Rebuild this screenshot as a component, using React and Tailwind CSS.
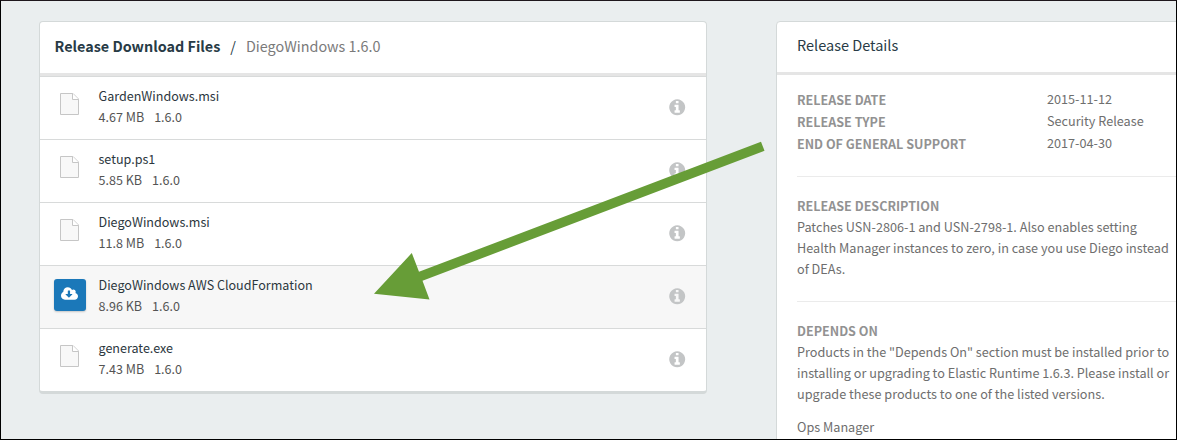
const files = [
  { name: 'GardenWindows.msi', size: '4.67 MB' },
  { name: 'setup.ps1', size: '5.85 KB' },
  { name: 'DiegoWindows.msi', size: '11.8 MB' },
  { name: 'DiegoWindows AWS CloudFormation', size: '8.96 KB', active: true },
  { name: 'generate.exe', size: '7.43 MB' },
];

const details = [
  ['RELEASE DATE', '2015-11-12'],
  ['RELEASE TYPE', 'Security Release'],
  ['END OF GENERAL SUPPORT', '2017-04-30'],
];

function FileIcon() {
  return (
    <svg className="mt-4 ml-1.5 block" width="20" height="23" viewBox="0 0 20 23">
      <path d="M0.5 0.5H13L18.5 6V21.5H0.5Z" fill="#f8f8f8" stroke="#c6c6c6" />
      <path d="M12.5 0.5V6.5H18.5" fill="#fff" stroke="#c6c6c6" />
    </svg>
  );
}

function DownloadButton() {
  return (
    <button className="mt-[13px] flex h-8 w-8 items-center justify-center rounded-[3px] bg-[#1b78b9] shadow-[0_1px_2px_rgba(0,0,0,0.2)]">
      <svg className="mr-px mb-[3px] block" width="17" height="16" viewBox="0 0 1920 1792" fill="#fff">
        <path d="M1280 928q0-14-9-23t-23-9h-224v-352q0-13-9.5-22.5t-22.5-9.5h-192q-13 0-22.5 9.5t-9.5 22.5v352h-224q-13 0-22.5 9.5t-9.5 22.5q0 14 9 23l352 352q9 9 23 9t23-9l351-351q10-12 10-24zm640 224q0 159-112.5 271.5t-271.5 112.5h-1088q-185 0-316.5-131.5t-131.5-316.5q0-130 70-240t188-165q-2-30-2-43 0-212 150-362t362-150q156 0 285.5 87t188.5 231q71-62 166-62 106 0 181 75t75 181q0 76-41 138 130 31 213.5 135.5t83.5 238.5z" />
      </svg>
    </button>
  );
}

function InfoIcon() {
  return (
    <svg className="mt-5 block" width="20" height="20" viewBox="-83 -93 1920 1920" fill="#c3c5c6">
      <path d="M1152 1376v-160q0-14-9-23t-23-9h-96v-512q0-14-9-23t-23-9h-320q-14 0-23 9t-9 23v160q0 14 9 23t23 9h96v320h-96q-14 0-23 9t-9 23v160q0 14 9 23t23 9h448q14 0 23-9t9-23zm-128-896v-160q0-14-9-23t-23-9h-192q-14 0-23 9t-9 23v160q0 14 9 23t23 9h192q14 0 23-9t9-23zm640 416q0 209-103 385.5t-279.5 279.5-385.5 103-385.5-103-279.5-279.5-103-385.5 103-385.5 279.5-279.5 385.5-103 385.5 103 279.5 279.5 103 385.5z" />
    </svg>
  );
}

function FileRow({ file }) {
  return (
    <li className={file.active ? 'flex h-[63px] bg-[#f7f7f7] pr-[19px] pl-3.5' : 'flex h-[63px] pr-[19px] pl-3.5'}>
      <div className="w-[44.5px]">{file.active ? <DownloadButton /> : <FileIcon />}</div>
      <div className="flex-1 pt-2 text-[12.56px] leading-[21px]">
        <div className="text-[#2c373e]">{file.name}</div>
        <div className="flex gap-[10px] text-[#545454]">
          <span>{file.size}</span>
          <span>1.6.0</span>
        </div>
      </div>
      <InfoIcon />
    </li>
  );
}

export default function App() {
  return (
    <div className="relative flex h-[440px] w-[1177px] overflow-hidden border border-black border-t-[#1e171c] bg-[#eaeeef] pt-5 pl-[38px] font-['Noto_Sans_CJK_SC',sans-serif] whitespace-nowrap">
      <section className="h-[373px] w-[668px] shrink-0 overflow-hidden rounded-[4px] border border-b-[3px] border-[#d4d9d9] bg-white">
        <h1 className="flex h-[54px] items-start border-b-[3px] border-[#e5e5e5] pt-3 pl-[14.5px] text-[14.38px] leading-6">
          <span className="font-bold text-[#283b46]">Release Download Files</span>
          <span className="ml-[10px] text-[#283b46]">/</span>
          <span className="ml-[10px] text-[#7a7a7a]">DiegoWindows 1.6.0</span>
        </h1>
        <ul className="divide-y divide-[#d8dada] border-t border-[#d8dada]">
          {files.map((file) => (
            <FileRow key={file.name} file={file} />
          ))}
        </ul>
      </section>

      <section className="ml-[69px] h-[440px] w-[430px] shrink-0 rounded-[4px] border border-[#d4d9d9] bg-white text-[12.66px] leading-[21px] text-[#6e6e6e]">
        <h2 className="h-[53px] border-b-[3px] border-[#e5e5e5] pt-[11px] pl-5 text-[14.5px] leading-6 text-[#283b46]">Release Details</h2>
        <div className="pt-[13px] pl-5">
          <dl className="h-[89px] border-b border-[#ebebeb]">
            {details.map(([label, value]) => (
              <div key={label} className="flex h-[22px]">
                <dt className="w-[250px] pt-px text-[12.56px] font-bold text-[#929292]">{label}</dt>
                <dd>{value}</dd>
              </div>
            ))}
          </dl>
          <div className="h-[125px] border-b border-[#ebebeb] pt-[18px]">
            <h3 className="text-[12.56px] font-bold text-[#929292]">RELEASE DESCRIPTION</h3>
            <p>
              Patches USN-2806-1 and USN-2798-1. Also enables setting
              <br />
              Health Manager instances to zero, in case you use Diego instead
              <br />
              of DEAs.
            </p>
          </div>
          <div className="pt-[18px]">
            <h3 className="text-[12.56px] font-bold text-[#929292]">DEPENDS ON</h3>
            <p>
              Products in the "Depends On" section must be installed prior to
              <br />
              installing or upgrading to Elastic Runtime 1.6.3. Please install or
              <br />
              upgrade these products to one of the listed versions.
            </p>
            <p className="mt-3">Ops Manager</p>
          </div>
        </div>
      </section>

      <svg className="absolute -top-px -left-px" width="1177" height="440" viewBox="0 0 1177 440">
        <path d="M374 293.7L411.8 253L419 271.8L761 141.7L764.5 150.8L422.5 280.8L429.5 299.5Z" fill="#679d37" />
      </svg>
    </div>
  );
}
